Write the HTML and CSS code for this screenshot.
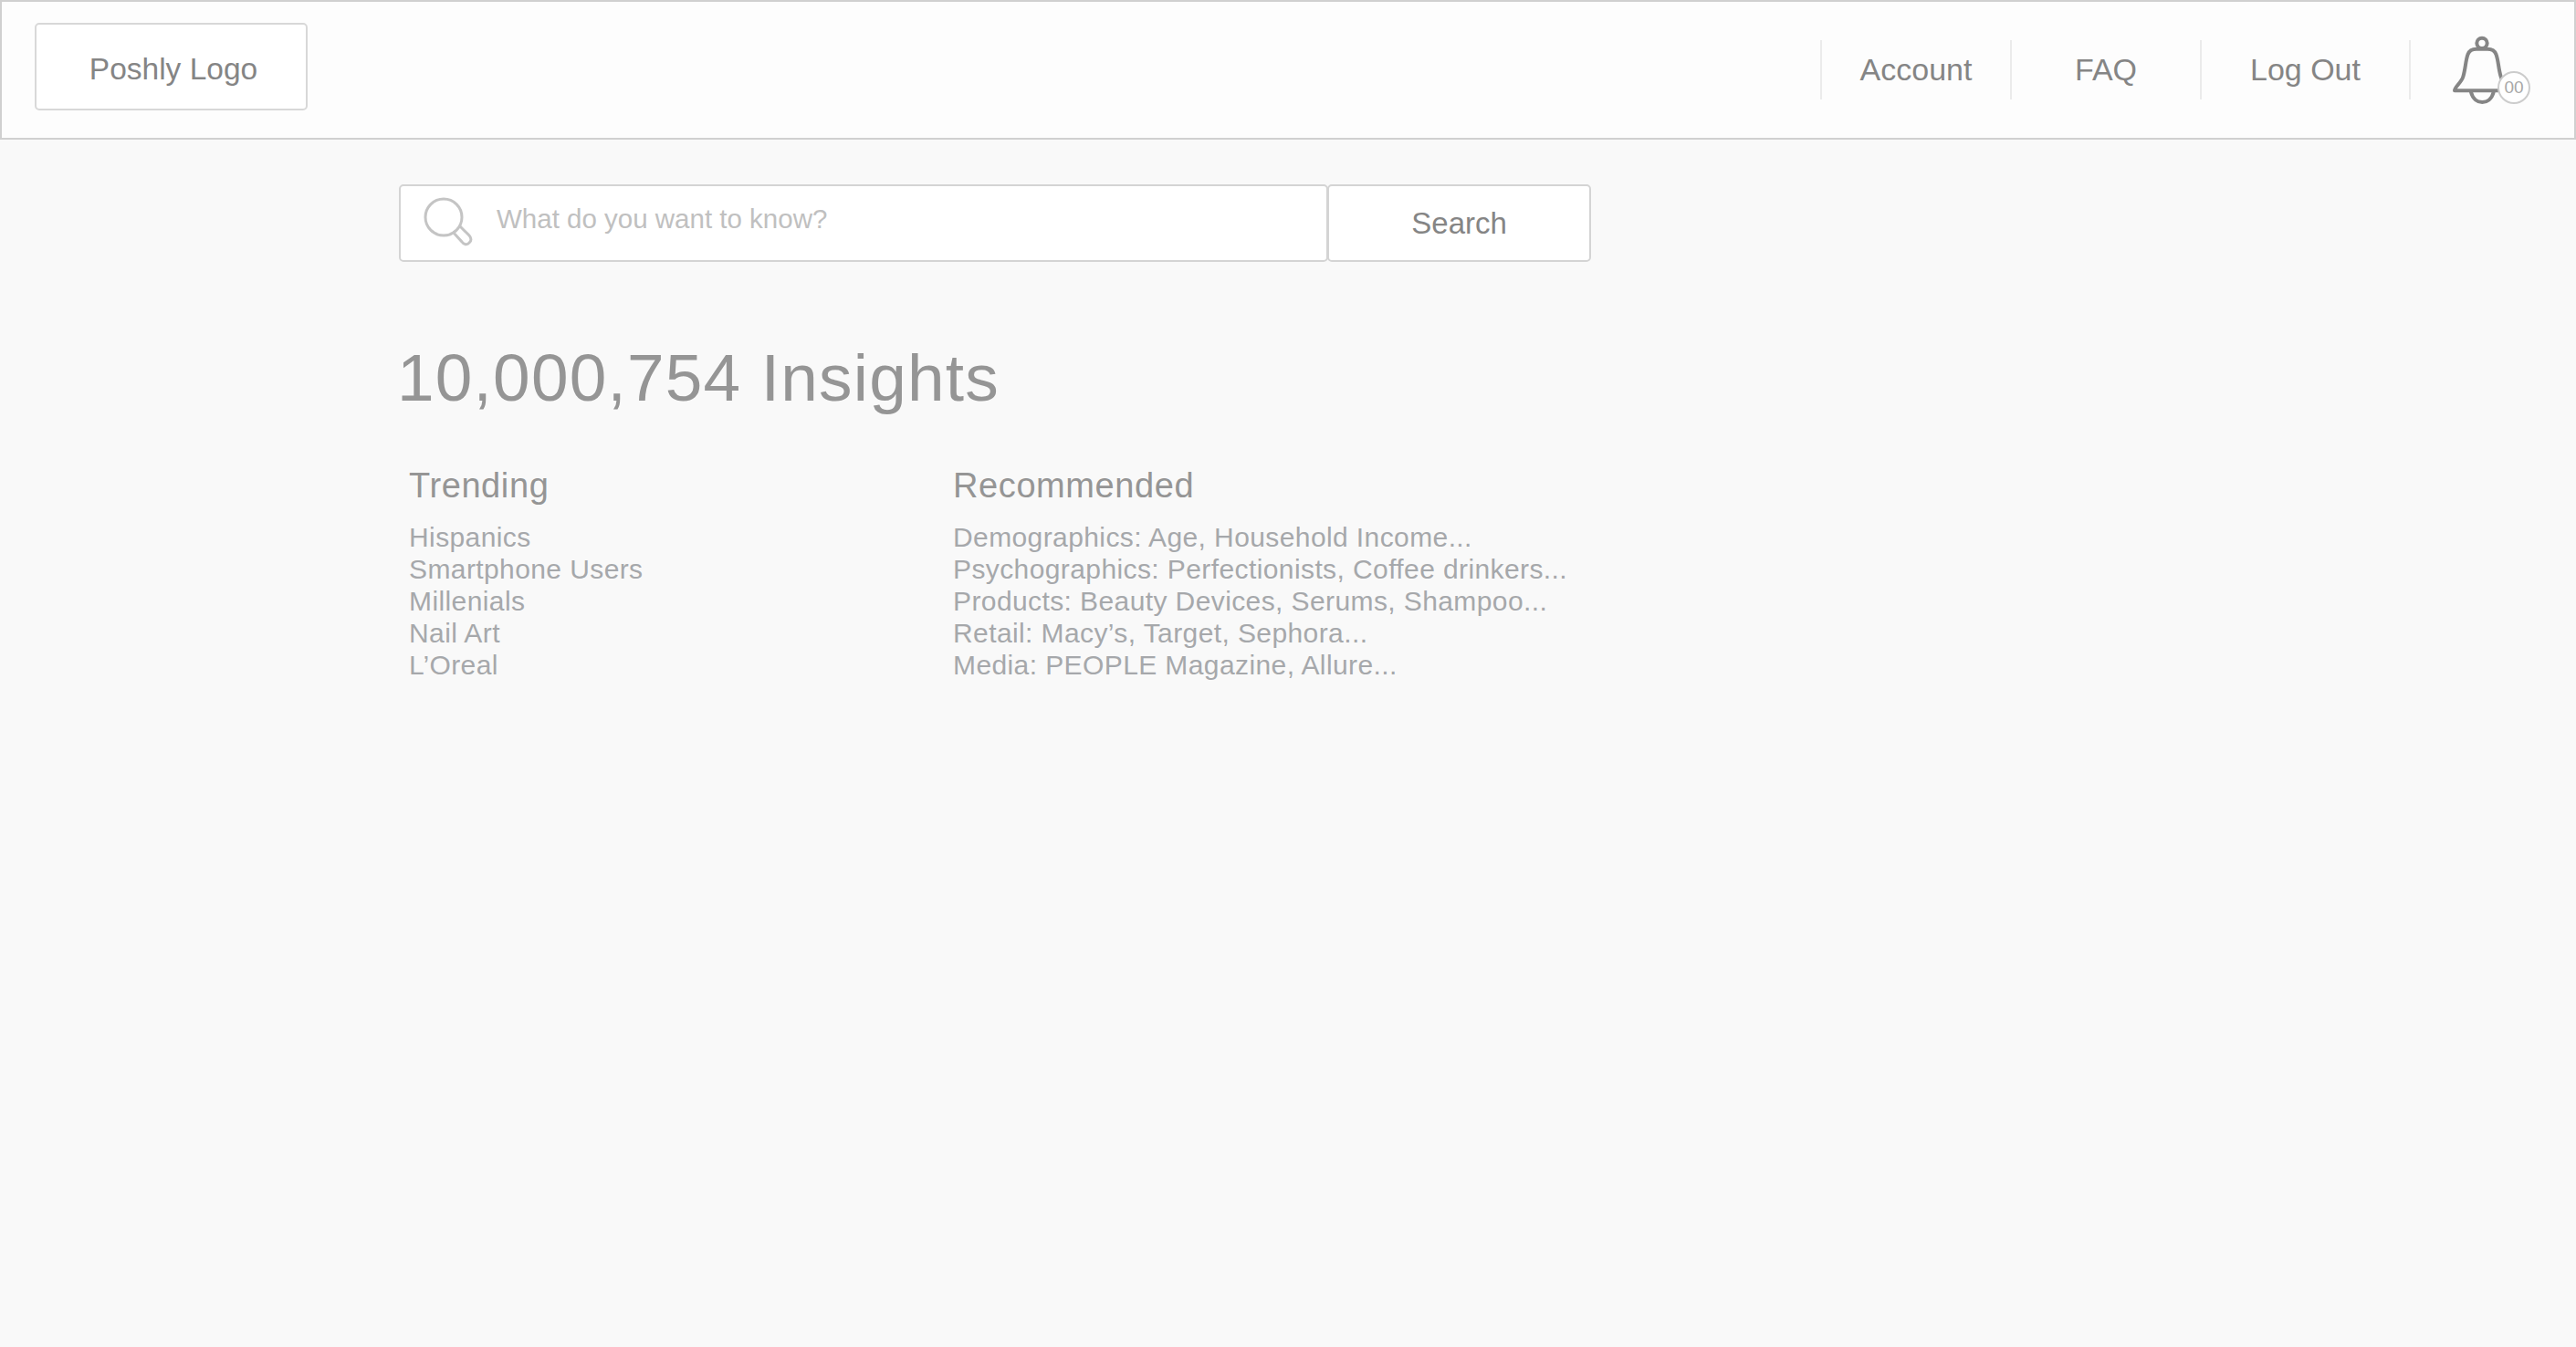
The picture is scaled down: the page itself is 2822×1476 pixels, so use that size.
FILE: index.html
```html
<!DOCTYPE html>
<html lang="en">
<head>
  <meta charset="UTF-8">
  <title>Poshly Insights</title>
  <link rel="stylesheet" href="styles.css">
</head>
<body>
  <header class="topbar">
    <div class="logo">Poshly Logo</div>
    <nav class="nav">
      <a class="nav-item nav-account">Account</a>
      <a class="nav-item nav-faq">FAQ</a>
      <a class="nav-item nav-logout">Log Out</a>
      <div class="nav-item nav-bell">
        <svg class="bell" viewBox="0 0 480 330" width="160" height="110" fill="none" stroke="#858585" stroke-width="12" stroke-linecap="round" stroke-linejoin="round">
          <circle cx="240" cy="82" r="17"/>
          <path d="M150 238 C150 226 172 212 178 192 C186 166 186 138 194 118 C198 106 208 101 222 101 L258 101 C272 101 282 106 286 118 C294 138 294 166 302 192 C306 206 318 226 330 238 Z"/>
          <path d="M204 243 C210 266 226 276 241 276 C256 276 272 266 278 243"/>
        </svg>
        <span class="badge">00</span>
      </div>
    </nav>
  </header>

  <main class="content">
    <form class="search">
      <div class="search-box">
        <svg class="search-icon" viewBox="0 0 60 60" width="60" height="60" fill="none" stroke="#c4c4c4" stroke-width="3">
          <circle cx="23" cy="23" r="20"/>
          <path d="M33 39 L43 50 C45 53 49 54 51 51 C54 49 53 45 51 43 L40 32"/>
        </svg>
        <span class="placeholder">What do you want to know?</span>
      </div>
      <button class="search-btn" type="button">Search</button>
    </form>

    <h1 class="count">10,000,754 Insights</h1>

    <div class="lists">
      <section class="list list-trending">
        <h2>Trending</h2>
        <ul>
          <li>Hispanics</li>
          <li>Smartphone Users</li>
          <li>Millenials</li>
          <li>Nail Art</li>
          <li>L’Oreal</li>
        </ul>
      </section>
      <section class="list">
        <h2>Recommended</h2>
        <ul>
          <li>Demographics: Age, Household Income...</li>
          <li>Psychographics: Perfectionists, Coffee drinkers...</li>
          <li>Products: Beauty Devices, Serums, Shampoo...</li>
          <li>Retail: Macy’s, Target, Sephora...</li>
          <li>Media: PEOPLE Magazine, Allure...</li>
        </ul>
      </section>
    </div>
  </main>
</body>
</html>
```

FILE: styles.css
```css
html, body {
  height: 100%;
}
body {
  margin: 0;
  background-color: #f9f9f9;
  font-family: "Liberation Sans", Arial, sans-serif;
  color: #858585;
}
.topbar {
  display: flex;
  justify-content: space-between;
  align-items: center;
  box-sizing: border-box;
  height: 153px;
  padding-left: 36px;
  background-color: #fdfdfd;
  border: 2px solid #d0d0d0;
}
.logo {
  box-sizing: border-box;
  width: 299px;
  height: 96px;
  margin-top: -7px;
  padding-left: 5px;
  background-color: #fff;
  border: 2px solid #d8d8d8;
  border-radius: 5px;
  font-size: 33.5px;
  line-height: 98px;
  text-align: center;
}
.nav {
  display: flex;
  align-items: center;
  margin-right: 1px;
}
.nav-item {
  box-sizing: border-box;
  height: 65px;
  border-left: 2px solid #ebebeb;
  font-size: 34px;
  line-height: 65px;
  text-align: center;
}
.nav-account, .nav-faq {
  width: 208px;
}
.nav-logout {
  width: 229px;
}
.nav-bell {
  position: relative;
  width: 180px;
}
.bell {
  position: absolute;
  left: -2px;
  top: -24px;
}
.badge {
  position: absolute;
  left: 95px;
  top: 34px;
  box-sizing: border-box;
  width: 36px;
  height: 36px;
  background-color: #fff;
  border: 2px solid #cccccc;
  border-radius: 50%;
  font-size: 19px;
  line-height: 32px;
  color: #a8a8a8;
}
.content {
  padding: 49px 0 0 437px;
}
.search {
  display: flex;
  width: 1306px;
  height: 85px;
}
.search-box {
  display: flex;
  box-sizing: border-box;
  width: 1019px;
  padding: 11px 0 0 24px;
  background-color: #fff;
  border: 2px solid #d4d4d4;
  border-radius: 5px;
}
.search-icon {
  flex: none;
}
.placeholder {
  margin-left: 21px;
  padding-top: 8px;
  font-size: 29.5px;
  line-height: 34px;
  color: #c0c0c0;
}
.search-btn {
  box-sizing: border-box;
  width: 289px;
  padding: 0;
  margin-left: -1px;
  background-color: #fff;
  border: 2px solid #d4d4d4;
  border-radius: 5px;
  font-family: inherit;
  font-size: 33px;
  color: #858585;
}
.count {
  margin: 82px 0 0 -2px;
  font-size: 73px;
  font-weight: normal;
  line-height: 90px;
  letter-spacing: 1.2px;
  color: #959595;
}
.lists {
  display: flex;
  margin-top: 51px;
  padding-left: 11px;
}
.list-trending {
  width: 596px;
}
.list h2 {
  margin: 0;
  font-size: 38px;
  font-weight: normal;
  line-height: 44px;
  letter-spacing: 0.6px;
  color: #959595;
}
.list ul {
  margin: 17px 0 0;
  padding: 0;
  list-style: none;
  font-size: 30px;
  line-height: 35px;
  letter-spacing: 0.4px;
  color: #a6a8ab;
}
```
